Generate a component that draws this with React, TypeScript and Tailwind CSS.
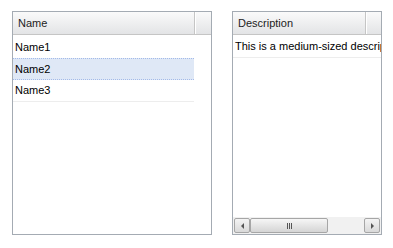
import React from 'react';

const font = { fontFamily: 'Tahoma, "Liberation Sans", Arial, sans-serif' };

const HeaderCell = ({ label, width }: { label: string; width: string }) => (
  <div className={`${width} h-full flex items-center pl-[5px] border-r border-r-[#c5c5c5] shadow-[1px_0_0_#fff] text-[11px] text-[#222]`}>
    {label}
  </div>
);

const Header = ({ label, width }: { label: string; width: string }) => (
  <div className="h-[23px] flex bg-gradient-to-b from-[#fafafa] to-[#e3e4e6] border-b border-b-[#c5c5c5] shrink-0">
    <HeaderCell label={label} width={width} />
    <div className="flex-1" />
  </div>
);

const NameGrid = () => {
  const rows = ['Name1', 'Name2', 'Name3'];
  return (
    <div className="w-[200px] h-[224px] border border-[#a4abb3] flex flex-col bg-white">
      <Header label="Name" width="w-[182px]" />
      <div className="w-[181px] pt-[1px]">
        {rows.map((r, i) => (
          <div
            key={r}
            className={
              i === 1
                ? 'h-[22px] flex items-center pl-[2px] bg-[#dfe8f6] border-y border-dotted border-[#a3bae9] text-[11px] text-black'
                : i === 2
                ? 'h-[22px] flex items-center pl-[2px] border-b border-b-[#ededed] text-[11px] text-black'
                : 'h-[22px] flex items-center pl-[2px] text-[11px] text-black'
            }
          >
            {r}
          </div>
        ))}
      </div>
    </div>
  );
};

const ScrollBar = () => (
  <div className="h-[17px] flex items-center bg-[#f1f1f1] px-[1px] shrink-0">
    <div className="w-[16px] h-[15px] border border-[#a6a6a6] rounded-[2px] bg-gradient-to-b from-[#f4f4f4] to-[#d9d9d9] flex items-center justify-center">
      <div className="w-0 h-0 border-y-[3px] border-y-transparent border-r-[3px] border-r-[#555]" />
    </div>
    <div className="w-[78px] h-[15px] border border-[#a6a6a6] rounded-[2px] bg-gradient-to-b from-[#f6f6f6] to-[#d5d5d5] flex items-center justify-center gap-[1px]">
      <div className="w-[1px] h-[6px] bg-[#555]" />
      <div className="w-[1px] h-[6px] bg-[#555]" />
      <div className="w-[1px] h-[6px] bg-[#555]" />
    </div>
    <div className="flex-1" />
    <div className="w-[16px] h-[15px] border border-[#a6a6a6] rounded-[2px] bg-gradient-to-b from-[#f4f4f4] to-[#d9d9d9] flex items-center justify-center">
      <div className="w-0 h-0 border-y-[3px] border-y-transparent border-l-[3px] border-l-[#555]" />
    </div>
  </div>
);

const DescriptionGrid = () => (
  <div className="w-[150px] h-[224px] border border-[#a4abb3] flex flex-col bg-white">
    <Header label="Description" width="w-[133px]" />
    <div className="flex-1 pt-[1px] overflow-hidden">
      <div className="h-[22px] flex items-center pl-[2px] border-b border-b-[#ededed] text-[11px] text-black whitespace-nowrap">
        This is a medium-sized description
      </div>
    </div>
    <ScrollBar />
  </div>
);

export default function App() {
  return (
    <div className="w-[393px] h-[248px] bg-white flex gap-[20px] pl-[12px] pt-[11px]" style={font}>
      <NameGrid />
      <DescriptionGrid />
    </div>
  );
}
